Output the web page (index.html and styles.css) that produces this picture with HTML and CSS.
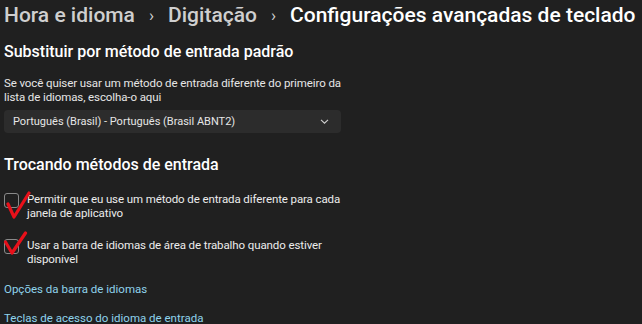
FILE: index.html
```html
<!DOCTYPE html>
<html lang="pt-BR">
  <head>
    <meta charset="UTF-8" />
    <meta name="viewport" content="width=device-width, initial-scale=1.0" />
    <title>Configurações avançadas de teclado</title>
    <link rel="stylesheet" href="styles.css">
  </head>
  <body>
    <div class="page">
      <div class="breadcrumb">
        <span class="crumb">Hora e idioma</span>
        <span class="sep">&#x203A;</span>
        <span class="crumb">Digitação</span>
        <span class="sep">&#x203A;</span>
        <span class="crumb current">Configurações avançadas de teclado</span>
      </div>

      <h2 class="section-title first">Substituir por método de entrada padrão</h2>
      <p class="desc">Se você quiser usar um método de entrada diferente do primeiro da lista de idiomas, escolha-o aqui</p>
      <div class="select">
        <span>Português (Brasil) - Português (Brasil ABNT2)</span>
        <svg width="9" height="5" viewBox="0 0 9 5"><path d="M1 0.8l3.5 3.4 3.5-3.4" fill="none" stroke="#cfcfcf" stroke-width="1.1"/></svg>
      </div>

      <h2 class="section-title">Trocando métodos de entrada</h2>
      <label class="check">
        <span class="box">
          <svg class="mark" width="30" height="36" viewBox="0 0 30 36"><path d="M4 21 L10 34 L25 10" fill="none" stroke="#e8101a" stroke-width="3.2" stroke-linecap="round" stroke-linejoin="round"/></svg>
        </span>
        <span class="check-text">Permitir que eu use um método de entrada diferente para cada janela de aplicativo</span>
      </label>
      <label class="check">
        <span class="box">
          <svg class="mark" width="30" height="36" viewBox="0 0 30 36"><path d="M1.5 13 L8 24 L21.5 4" fill="none" stroke="#e8101a" stroke-width="3.2" stroke-linecap="round" stroke-linejoin="round"/></svg>
        </span>
        <span class="check-text">Usar a barra de idiomas de área de trabalho quando estiver disponível</span>
      </label>

      <a class="link first-link" href="#">Opções da barra de idiomas</a>
      <a class="link" href="#">Teclas de acesso do idioma de entrada</a>
    </div>
  </body>
</html>
```

FILE: styles.css
```css
body {
  margin: 0;
  background-color: #202020;
  color: #ffffff;
  font-family: Roboto, "Noto Sans", sans-serif;
  overflow: hidden;
}

.page {
  padding: 0 4px;
  width: 640px;
}

.breadcrumb {
  display: flex;
  align-items: center;
  height: 30px;
  font-size: 21px;
  font-weight: 500;
  white-space: nowrap;
}

.crumb {
  color: #cfcfcf;
}

.crumb.current {
  color: #ffffff;
}

.sep {
  color: #cfcfcf;
  font-size: 17px;
  font-weight: 400;
  margin: 0 14px;
}

.section-title {
  margin: 22px 0 0;
  font-size: 16px;
  font-weight: 500;
  line-height: 20px;
}

.section-title.first {
  margin-top: 12px;
}

.desc {
  margin: 14px 0 0;
  width: 345px;
  font-size: 11.5px;
  line-height: 14px;
  letter-spacing: -0.1px;
  color: #e6e6e6;
}

.select {
  display: flex;
  justify-content: space-between;
  align-items: center;
  box-sizing: border-box;
  width: 337px;
  height: 23px;
  margin-top: 6px;
  padding: 0 12px 0 9px;
  background-color: #2c2c2c;
  border-radius: 4px;
  font-size: 11px;
  color: #e6e6e6;
}

.check {
  display: flex;
  align-items: flex-start;
  gap: 8px;
  margin-top: 17px;
  font-size: 11.5px;
  line-height: 14px;
  letter-spacing: -0.1px;
  color: #ececec;
}

.check + .check {
  margin-top: 18px;
}

.box {
  position: relative;
  flex: none;
  width: 13px;
  height: 13px;
  margin-top: 1px;
  border: 1px solid #8a8a8a;
  border-radius: 3px;
}

.mark {
  position: absolute;
  left: -1px;
  top: -11px;
}

.check-text {
  width: 325px;
}

.link {
  display: block;
  margin-top: 16px;
  font-size: 11.5px;
  line-height: 14px;
  color: #8fd3ec;
  text-decoration: none;
}

.link + .link {
  margin-top: 15px;
}
```
